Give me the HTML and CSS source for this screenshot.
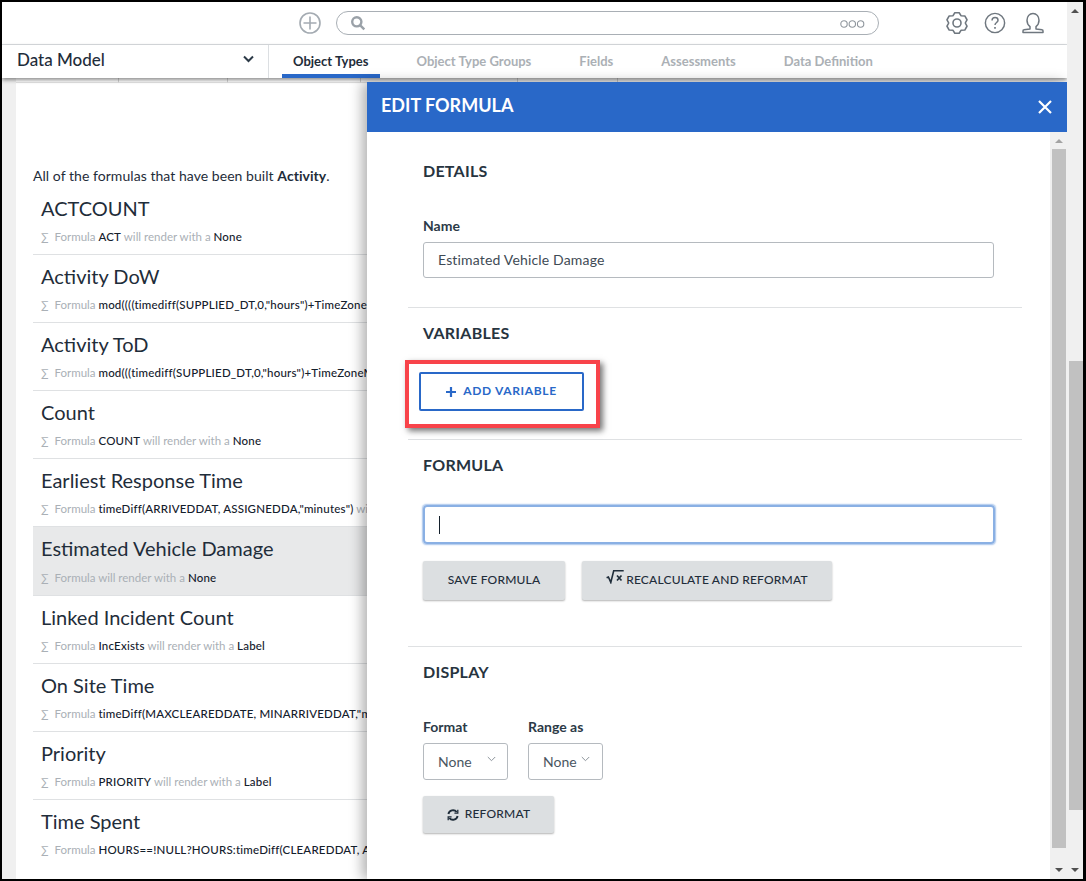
FILE: index.html
```html
<!DOCTYPE html>
<html lang="en">
<head>
<meta charset="utf-8">
<title>Edit Formula</title>
<link rel="stylesheet" href="styles.css">
</head>
<body>
<div class="frame">
  <div class="app">
    <header class="topbar">
      <svg class="add-icon" width="24" height="24" viewBox="0 0 24 24" fill="none" stroke="#a4abb2" stroke-width="1.6"><circle cx="12" cy="12" r="10"/><path d="M12 5.5v13M5.5 12h13"/></svg>
      <div class="search">
        <svg width="16" height="16" viewBox="0 0 16 16" fill="none" stroke="#9aa1a8" stroke-width="2.4"><circle cx="6.8" cy="6.8" r="4.6"/><path d="M10.3 10.3l4 4"/></svg>
        <svg class="more" width="25" height="8" viewBox="0 0 25 8" fill="none" stroke="#8f969d" stroke-width="1.1"><circle cx="4" cy="4" r="3.2"/><circle cx="12.3" cy="4" r="3.2"/><circle cx="20.6" cy="4" r="3.2"/></svg>
      </div>
      <div class="top-icons">
        <svg width="24" height="24" viewBox="0 0 24 24" fill="none" stroke="#6f777f" stroke-width="1.6" stroke-linejoin="round"><path d="M9.82 1.73L14.18 1.73L16.15 4.81L19.8 4.97L21.99 8.76L20.3 12L21.99 15.24L19.8 19.03L16.15 19.19L14.18 22.27L9.82 22.27L7.85 19.19L4.2 19.03L2.01 15.24L3.7 12L2.01 8.76L4.2 4.97L7.85 4.81Z"/><circle cx="12" cy="12" r="4"/></svg>
        <svg width="22" height="22" viewBox="0 0 24 24" fill="none" stroke="#6f777f" stroke-width="1.6"><circle cx="12" cy="12" r="10.500"/><path d="M8.800 9.200c0-2 1.500-3.200 3.300-3.200s3.200 1.200 3.200 2.900c0 2.600-3.300 2.600-3.300 5.400"/><path d="M12 16.400v2" stroke-width="1.800"/></svg>
        <svg class="user" width="22" height="22" viewBox="0 0 22 22" fill="none" stroke="#6f777f" stroke-width="1.500" stroke-linejoin="round"><path d="M8 14.600C6 13 5 10.600 5 8.200 5 4.400 7.500 1.400 11 1.400s6 3 6 6.800c0 2.400-1 4.800-3 6.400v2.300l6 .9c.8.1 1 .5 1 1.200v1.600H1v-1.600c0-.7.2-1.100 1-1.200l6-.9z"/></svg>
      </div>
    </header>
    <nav class="navbar">
      <div class="nav-title"><span>Data Model</span>
        <svg width="11" height="8" viewBox="0 0 11 8" fill="none" stroke="#2c3a47" stroke-width="2"><path d="M1 1.500l4.500 4.500 4.500-4.500"/></svg>
      </div>
      <div class="tabs">
        <a class="tab active">Object Types</a>
        <a class="tab">Object Type Groups</a>
        <a class="tab">Fields</a>
        <a class="tab">Assessments</a>
        <a class="tab">Data Definition</a>
      </div>
    </nav>
    <main class="content">
      <div class="stubs"><i class="s1"></i><i class="s2"></i><i class="s3"></i><i class="s4"></i><i class="s5"></i></div>
      <p class="intro">All of the formulas that have been built <b>Activity</b>.</p>
      <ul class="list">
        <li class="row"><h3>ACTCOUNT</h3><p><i>∑</i> Formula <b>ACT</b> will render with a <b>None</b></p></li>
        <li class="row"><h3>Activity DoW</h3><p><i>∑</i> Formula <b>mod((((timediff(SUPPLIED_DT,0,"hours")+TimeZoneMinutes</b></p></li>
        <li class="row"><h3>Activity ToD</h3><p><i>∑</i> Formula <b>mod(((timediff(SUPPLIED_DT,0,"hours")+TimeZoneMinutes</b></p></li>
        <li class="row"><h3>Count</h3><p><i>∑</i> Formula <b>COUNT</b> will render with a <b>None</b></p></li>
        <li class="row"><h3>Earliest Response Time</h3><p><i>∑</i> Formula <b>timeDiff(ARRIVEDDAT, ASSIGNEDDA,"minutes")</b> will render</p></li>
        <li class="row selected"><h3>Estimated Vehicle Damage</h3><p><i>∑</i> Formula will render with a <b>None</b></p></li>
        <li class="row"><h3>Linked Incident Count</h3><p><i>∑</i> Formula <b>IncExists</b> will render with a <b>Label</b></p></li>
        <li class="row"><h3>On Site Time</h3><p><i>∑</i> Formula <b>timeDiff(MAXCLEAREDDATE, MINARRIVEDDAT,"minutes")</b></p></li>
        <li class="row"><h3>Priority</h3><p><i>∑</i> Formula <b>PRIORITY</b> will render with a <b>Label</b></p></li>
        <li class="row"><h3>Time Spent</h3><p><i>∑</i> Formula <b>HOURS==!NULL?HOURS:timeDiff(CLEAREDDAT, ASSIGNED</b></p></li>
      </ul>
    </main>
    <aside class="drawer">
      <div class="drawer-head">
        <h2>EDIT FORMULA</h2>
        <svg width="14" height="14" viewBox="0 0 14 14" fill="none" stroke="#fff" stroke-width="2.2"><path d="M1 1l12 12M13 1L1 13"/></svg>
      </div>
      <div class="drawer-body">
        <div class="form">
          <section class="sec sec-details">
            <h4>DETAILS</h4>
            <label class="lbl lbl-name">Name</label>
            <div class="field">Estimated Vehicle Damage</div>
          </section>
          <section class="sec sec-vars">
            <h4>VARIABLES</h4>
            <div class="annot">
              <button class="btn-outline"><svg width="10" height="10" viewBox="0 0 10 10" fill="none" stroke="#2968c8" stroke-width="2.2"><path d="M5 0v10M0 5h10"/></svg><span>ADD VARIABLE</span></button>
              <div class="redbox"></div>
            </div>
          </section>
          <section class="sec sec-formula">
            <h4>FORMULA</h4>
            <div class="field focus"><span class="caret"></span></div>
            <div class="btns">
              <button class="btn btn-save"><span>SAVE FORMULA</span></button>
              <button class="btn btn-recalc"><span class="root"><svg width="18" height="14" viewBox="0 0 18 14" fill="none" stroke="#1f2d3a"><path d="M.6 8l1.800-.8 2.400 5.400L7.700 1h10" stroke-width="1.600" transform="translate(0 -.2)"/><path d="M11 5.500l4.500 5M15.500 5.500l-4.500 5" stroke-width="1.700"/></svg></span><span>RECALCULATE AND REFORMAT</span></button>
            </div>
          </section>
          <section class="sec sec-display">
            <h4>DISPLAY</h4>
            <div class="selects">
              <div class="sel-group">
                <label class="lbl">Format</label>
                <div class="select sel-format">None<svg width="9" height="6" viewBox="0 0 9 6" fill="none" stroke="#8d949b" stroke-width="1"><path d="M.8 1l3.700 3.700L8.200 1"/></svg></div>
              </div>
              <div class="sel-group">
                <label class="lbl">Range as</label>
                <div class="select sel-range">None<svg width="9" height="6" viewBox="0 0 9 6" fill="none" stroke="#8d949b" stroke-width="1"><path d="M.8 1l3.700 3.700L8.200 1"/></svg></div>
              </div>
            </div>
            <button class="btn btn-reformat"><svg width="12" height="12" viewBox="0 0 12 12" fill="none" stroke="#1f2d3a" stroke-width="1.900"><path d="M1.400 5A4.700 4.700 0 0 1 9.700 3M10.600 7a4.700 4.700 0 0 1-8.300 2"/><path d="M10.800.8v3.400H7.400M1.200 11.200V7.800h3.400" stroke-width="1.300"/></svg><span>REFORMAT</span></button>
          </section>
        </div>
        <div class="scrollbar inner">
          <span class="arrow up"></span>
          <div class="track"><div class="thumb"></div></div>
          <span class="arrow down"></span>
        </div>
      </div>
    </aside>
  </div>
  <div class="scrollbar outer">
    <span class="arrow up"></span>
    <div class="track"><div class="thumb"></div></div>
    <span class="arrow down"></span>
  </div>
</div>
</body>
</html>
```
FILE: styles.css
```css
* { box-sizing: border-box; }
html, body { margin: 0; padding: 0; background: #000; overflow: hidden; }
body { font-family: "Lato", "Noto Sans", sans-serif; color: #1f2d3a; }
h2, h3, h4, p, ul { margin: 0; padding: 0; }
ul { list-style: none; }
button { font-family: inherit; cursor: pointer; }

.frame {
  width: 1086px; height: 881px;
  border-style: solid; border-color: #000;
  border-width: 2px 3px 2px 2px;
  display: flex; background: #fff; overflow: hidden;
}
.app { position: relative; width: 1065px; height: 877px; display: flex; flex-direction: column; overflow: hidden; }

.topbar {
  height: 43px; flex: none; background: #fff;
  border-bottom: 1px solid #dcdfe2;
  display: flex; align-items: center;
  padding: 0 0 3px 296px;
}
.add-icon { width: 24px; height: 24px; margin-top: 2px; }
.search {
  width: 543px; height: 24px; margin-left: 14px; margin-top: 2px;
  border: 1px solid #a9afb5; border-radius: 12px;
  display: flex; align-items: center; justify-content: space-between;
  padding: 0 13px 0 13px;
}
.more { margin-top: 2px; }
.top-icons { display: flex; align-items: center; gap: 15px; margin-left: 66px; margin-top: 2px; }
.user { margin-left: 1px; }

.navbar {
  height: 33px; flex: none; background: #fff; display: flex;
  position: relative; z-index: 2;
  box-shadow: 0 2px 4px rgba(0,0,0,.45);
}
.nav-title {
  width: 267px; border-right: 1px solid #dcdfe2;
  display: flex; align-items: center; justify-content: space-between;
  padding: 0 14px 5px 15px; font-size: 17px; font-weight: 500; color: #1f2d3a;
}
.tabs { display: flex; padding-left: 13px; gap: 1px; }
.tab {
  font-size: 13px; font-weight: 700; color: #abb0b5;
  padding: 8px 11px 0; height: 33px; border-bottom: 4px solid transparent;
  margin-right: 25px;
}
.tab.active { color: #1f2d3a; border-bottom-color: #2968c8; }

.content {
  flex: 1; min-height: 0; margin-left: 14px; background: #fff;
  padding-left: 17px; position: relative; overflow: hidden;
  box-shadow: -14px 0 0 0 #f0f0f0;
}
.stubs { height: 5px; margin-left: -17px; display: flex; }
.stubs i { display: block; height: 5px; border-right: 1px solid #d5d5d5; border-bottom: 1px solid #e3e3e3; }
.stubs .s1 { width: 103px; }
.stubs .s2 { width: 109px; }
.stubs .s3 { width: 133px; }
.stubs .s4 { width: 157px; }
.stubs .s5 { width: 100px; }
.intro { font-size: 14px; letter-spacing: .05px; line-height: 20px; margin-top: 83px; height: 20px; color: #1f2d3a; }
.intro b { font-weight: 700; }
.list { width: 520px; margin-top: 1px; }
.row {
  height: 68.1px; padding: 9px 0 0 8px;
  border-bottom: 1px solid #dfe1e3;
  overflow: hidden; white-space: nowrap;
}
.row:last-child { border-bottom: 0; }
.row h3 { font-size: 20px; font-weight: 400; line-height: 24px; color: #1f2d3a; }
.row p { font-size: 11.500px; line-height: 16px; margin-top: 9px; color: #aab0b6; }
.row p b { color: #14202c; font-weight: 500; letter-spacing: .2px; }
.row p i { font-style: normal; font-size: 11px; margin-right: 3px; }
.row.selected { background: #e8e9ea; }
.row.selected p { margin-top: 10px; }

.drawer {
  position: absolute; left: 365px; top: 80px; width: 700px; bottom: 0;
  background: #fff; z-index: 3;
  box-shadow: -5px 0 12px rgba(0,0,0,.3);
  display: flex; flex-direction: column;
}
.drawer-head {
  height: 50px; flex: none; background: #2968c8; color: #fff;
  display: flex; align-items: center; justify-content: space-between;
  padding: 0 15px 0 14px;
}
.drawer-head h2 { font-size: 18px; font-weight: 700; padding-bottom: 4px; }
.drawer-body { flex: 1; min-height: 0; display: flex; padding-left: 41px; justify-content: space-between; }
.form { width: 614px; }
.sec { padding: 15px 0 0 15px; border-bottom: 1px solid #dfe1e3; }
.sec h4 { font-size: 16px; font-weight: 700; letter-spacing: .25px; line-height: 20px; color: #27343f; }
.lbl { display: block; font-size: 14px; font-weight: 700; line-height: 20px; color: #2c3a47; }
.lbl-name { margin-top: 35px; }
.sec-details { padding-top: 29px; height: 176px; }
.sec-vars { height: 132px; }
.sec-formula { height: 207px; }
.sec-display { border-bottom: 0; }
.field {
  width: 571px; height: 36px; margin-top: 6px;
  border: 1px solid #b5babf; border-radius: 3px;
  font-size: 14px; letter-spacing: .17px; line-height: 34px; padding-left: 14px; color: #3e4a55;
}
.field.focus {
  width: 572px; height: 39px; margin-top: 30px;
  border: 2px solid #8ab0e4; border-radius: 4px; padding-left: 14px;
  box-shadow: 0 0 1.500px .5px #a9c5ec;
  display: flex; align-items: center;
}
.caret { width: 1px; height: 18px; background: #14202c; }
.annot { position: relative; width: 165px; margin: 29px 0 0 -4px; }
.btn-outline {
  width: 165px; height: 39px; background: #fff;
  border: 2px solid #2968c8; border-radius: 2px; color: #2968c8;
  font-size: 12px; font-weight: 700; letter-spacing: .65px;
  display: flex; align-items: center; justify-content: center; gap: 7px; padding: 0 0 0 0;
}
.btn-outline span, .btn span { padding-bottom: 2px; }
.redbox {
  position: absolute; left: -14px; right: -16px; top: -12px; bottom: -17px;
  border: 4px solid #f8434a;
  box-shadow: 3px 3px 6px rgba(0,0,0,.55);
}
.btns { display: flex; gap: 17px; margin-top: 17px; }
.btn {
  height: 39px; border: 0; border-radius: 2px; background: #dcdfe1;
  box-shadow: 0 1px 2px rgba(0,0,0,.3);
  font-size: 12px; font-weight: 500; letter-spacing: .2px; color: #1f2d3a;
  display: flex; align-items: center; justify-content: center;
}
.btn-save { width: 142px; }
.btn-recalc { width: 250px; gap: 2px; }
.btn .root { display: block; margin-top: -8px; padding: 0; line-height: 0; }
.selects { display: flex; gap: 20px; margin-top: 35px; }
.select {
  height: 37px; margin-top: 6px; border: 1px solid #b5babf; border-radius: 3px;
  font-size: 14px; color: #4a5661; padding-left: 14px;
  display: flex; align-items: center; position: relative;
}
.select svg { margin-top: -6px; }
.sel-format { width: 85px; gap: 15px; }
.sel-range { width: 75px; gap: 4px; }
.btn-reformat { width: 131px; height: 37px; margin-top: 16px; gap: 6px; }

.scrollbar { width: 17px; flex: none; background: #f0f0f0; display: flex; flex-direction: column; align-items: center; }
.scrollbar .track { flex: 1; width: 100%; display: flex; }
.arrow { flex: none; width: 0; height: 0; border-left: 4px solid transparent; border-right: 4px solid transparent; }
.arrow.up { border-bottom: 4px solid #a3a3a3; margin: 7px 0 6px; }
.arrow.down { border-top: 4px solid #505050; margin: 6px 0 7px; }
.scrollbar .thumb { background: #c1c1c1; }
.inner .thumb { width: 14px; height: 699px; margin-left: 2px; }
.outer { width: 16px; height: 877px; }
.outer .arrow.up { border-bottom-color: #505050; }
.outer .thumb { width: 14px; height: 449px; margin: 342px 0 0 2px; }
```
